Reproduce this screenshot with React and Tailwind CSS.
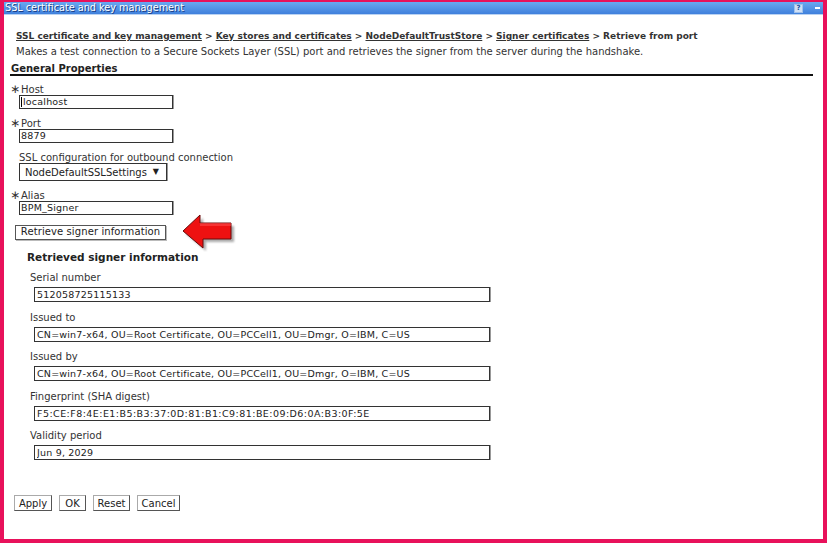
const font = "font-['DejaVu_Sans',Verdana,sans-serif]";

const Field = ({ label, value, tracking = "tracking-[0.2px]" }) => (
  <div className="mt-[9.5px] first:mt-0">
    <div className="ml-[26px] text-[10px] leading-[12px] text-[#333]">{label}</div>
    <input
      readOnly
      value={value}
      className={`mt-[3px] ml-[30px] block h-[15px] w-[456px] border border-[#333] bg-white px-[2px] text-[9.5px] leading-[13px] ${tracking} text-[#222] shadow-[1px_0_0_#999] outline-none`}
    />
  </div>
);

const Required = ({ label }) => (
  <div className="-ml-[2px] flex items-end text-[10px] leading-[11px] text-[#333]">
    <span className="w-[11px] text-[12px] leading-[11px]">∗</span>
    <span>{label}</span>
  </div>
);

const TextBox = ({ value, cursor }) => (
  <div className="ml-[7px] flex h-[14px] w-[154px] items-center border border-[#333] bg-white px-[1px] text-[9.5px] tracking-[0.2px] text-[#222] shadow-[1px_0_0_#999]">
    {cursor && <span className="mr-px h-[10px] w-px bg-black" />}
    {value}
  </div>
);

const Arrow = () => (
  <svg width="56" height="40" viewBox="0 0 56 40" className="-my-[12px] ml-[15px]">
    <defs>
      <filter id="blur" x="-20%" y="-20%" width="140%" height="140%">
        <feGaussianBlur stdDeviation="1.2" />
      </filter>
    </defs>
    <polygon points="5,22 22,6 22,14 53,14 53,30 25,30 25,39" fill="#888" opacity="0.7" filter="url(#blur)" />
    <polygon points="2,19 19,3 19,11 50,11 50,27 22,27 22,36" fill="#ee1111" stroke="#6a0a0a" strokeWidth="1" strokeLinejoin="round" />
    <polygon points="19,11 50,11 50,14 19,14" fill="#ff5555" opacity="0.5" />
  </svg>
);

const Button = ({ children, w }) => (
  <button className={`h-[16px] ${w} border border-[#aaa] border-r-[#555] border-b-[#555] bg-white text-[10px] leading-[13px] text-[#222]`}>
    {children}
  </button>
);

export default function App() {
  return (
    <div className={`${font} h-[543px] w-[827px] overflow-hidden bg-[#e8115b] pt-[2px] pr-[4px] pb-[4px] pl-[4px]`}>
      <div className="flex h-full flex-col bg-white">
        {/* title bar */}
        <div className="flex h-[12px] items-center bg-gradient-to-b from-[#6aa8f0] to-[#3f80dc] pl-px pr-[3px]">
          <span className="text-[9.7px] leading-[12px] text-white [text-shadow:1px_1px_0_#1a3c80]">SSL certificate and key management</span>
          <span className="ml-auto mr-[12px] flex h-[9px] w-[9px] items-center justify-center border border-[#9fc0ea] bg-[#cfe0f6] text-[7px] font-bold leading-none text-[#2050a0]">?</span>
          <span className="h-[2px] w-[5px] bg-white" />
        </div>
        <div className="h-px bg-[#b9d2f2]" />

        <div className="mt-[15px] ml-[12px] text-[9px] font-bold leading-[12px] text-[#333]">
          <span className="underline">SSL certificate and key management</span>
          {" > "}
          <span className="underline">Key stores and certificates</span>
          {" > "}
          <span className="underline">NodeDefaultTrustStore</span>
          {" > "}
          <span className="underline">Signer certificates</span>
          {" > Retrieve from port"}
        </div>
        <div className="mt-[4px] ml-[12px] text-[10px] leading-[12px] text-[#333]">
          Makes a test connection to a Secure Sockets Layer (SSL) port and retrieves the signer from the server during the handshake.
        </div>

        <div className="mt-[5px] ml-[6px] w-[803px] border-b-2 border-[#111] pl-px text-[10px] font-bold leading-[11px] text-[#222]">
          General Properties
        </div>

        <div className="ml-[8px] flex flex-col">
          <div className="mt-[8px]"><Required label="Host" /></div>
          <TextBox value="localhost" cursor />

          <div className="mt-[9px]"><Required label="Port" /></div>
          <TextBox value="8879" />

          <div className="mt-[9px] ml-[7px] text-[10px] leading-[11px] text-[#333]">SSL configuration for outbound connection</div>
          <div className="ml-[7px] flex h-[18px] w-[148px] items-center border border-[#333] bg-white pl-[5px] pr-[7px] text-[10px] text-[#222] shadow-[1px_0_0_#999]">
            NodeDefaultSSLSettings
            <span className="ml-auto text-[8px]">▼</span>
          </div>

          <div className="mt-[9px]"><Required label="Alias" /></div>
          <TextBox value="BPM_Signer" />

          <div className="mt-[9px] flex items-center">
            <button className="ml-[3px] h-[15px] w-[151px] border border-[#555] bg-white text-[10px] leading-[12px] tracking-[0.1px] text-[#222] shadow-[1px_1px_0_#bbb]">
              Retrieve signer information
            </button>
            <Arrow />
          </div>
        </div>

        <div className="mt-[11px] ml-[23px] text-[10.5px] font-bold leading-[13px] text-[#222]">Retrieved signer information</div>

        <div className="mt-[8px]">
          <Field label="Serial number" value="512058725115133" />
          <Field label="Issued to" value="CN=win7-x64, OU=Root Certificate, OU=PCCell1, OU=Dmgr, O=IBM, C=US" />
          <Field label="Issued by" value="CN=win7-x64, OU=Root Certificate, OU=PCCell1, OU=Dmgr, O=IBM, C=US" />
          <Field label="Fingerprint (SHA digest)" value="F5:CE:F8:4E:E1:B5:B3:37:0D:81:B1:C9:81:BE:09:D6:0A:B3:0F:5E" tracking="tracking-[0.45px]" />
          <Field label="Validity period" value="Jun 9, 2029" />
        </div>

        <div className="mt-[35px] ml-[10px] flex gap-[7px]">
          <Button w="w-[38px]">Apply</Button>
          <Button w="w-[27px]">OK</Button>
          <Button w="w-[37px]">Reset</Button>
          <Button w="w-[43px]">Cancel</Button>
        </div>
      </div>
    </div>
  );
}
